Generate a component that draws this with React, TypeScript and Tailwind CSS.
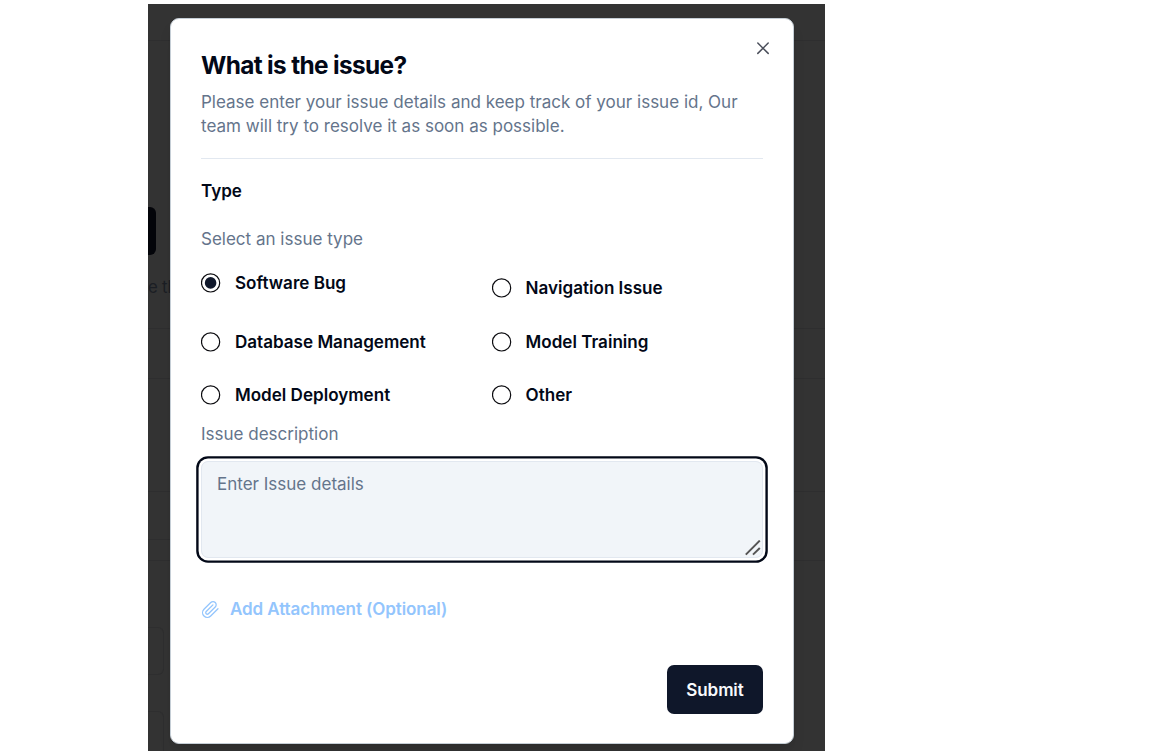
import React from "react";

type OptionProps = { label: string; checked?: boolean; className?: string };

function Option({ label, checked = false, className = "" }: OptionProps) {
  return (
    <div className={`flex h-5 items-center gap-[14px] ${className}`}>
      <span
        role="radio"
        aria-checked={checked}
        className="flex size-5 shrink-0 items-center justify-center"
      >
        <svg viewBox="0 0 20 20" className="size-5" fill="none">
          <circle cx="9.6" cy="9.9" r="9.1" stroke="#0b0b0f" strokeWidth="1.2" />
          {checked && <circle cx="9.6" cy="9.9" r="5.8" fill="#0f172a" />}
        </svg>
      </span>
      <span className="text-[17.07px] leading-5 font-semibold">{label}</span>
    </div>
  );
}

function Backdrop() {
  return (
    <div className="absolute inset-0 flex flex-col overflow-hidden bg-[#333333] text-[#1b1e24]">
      <div className="h-[37px] shrink-0 border-b border-[#2e2e2f]" />
      <div className="h-[166px] shrink-0" />
      <div className="h-12 w-2 shrink-0 rounded-r-md bg-[#030409]" />
      <div className="mt-[20px] h-6 shrink-0 text-[16.8px] leading-6 tracking-[-0.2px] whitespace-nowrap">e the</div>
      <div className="mt-[29px] h-[51px] shrink-0 border-y border-[#2e2e2f]" />
      <div className="h-[113px] shrink-0 border-b border-[#2e2e2f]" />
      <div className="h-[48px] w-8 shrink-0 border-b border-[#2e2e2f]" />
      <div className="h-[21px] shrink-0 border-b border-[#2e2e2f]" />
      <div className="mt-[66px] h-12 w-4 shrink-0 rounded-r-md border border-l-0 border-[#2e2e2f]" />
      <div className="mt-9 h-12 w-4 shrink-0 rounded-r-md border border-l-0 border-[#2e2e2f]" />
    </div>
  );
}

export default function App() {
  return (
    <div className="h-[751px] w-[1152px] overflow-hidden bg-white pt-1 pl-[148px] font-['Inter',sans-serif]">
      <div className="relative h-[747px] w-[677px] overflow-hidden pt-[14px] pl-[22.4px]">
        <Backdrop />
        <div
          role="dialog"
          className="relative flex h-[726px] w-[623.2px] flex-col rounded-[9px] border border-[#c5ced6] bg-white pr-[29.6px] pl-[29.6px] text-[#020817] shadow-lg"
        >
          <button aria-label="Close" className="absolute top-[19px] right-[19.6px] size-5">
            <svg viewBox="0 0 20 20" className="size-5" fill="none" stroke="#4b4f5b" strokeWidth="1.5">
              <path d="M4.8 5 15.2 15.4M15.2 5 4.8 15.4" strokeLinecap="round" />
            </svg>
          </button>

          <h1 className="mt-[34px] h-6 text-[24.4px] leading-6 font-bold tracking-[-0.65px]">
            What is the issue?
          </h1>
          <p className="mt-[13px] w-[562px] text-[17.03px] leading-6 whitespace-nowrap text-[#64748b]">
            Please enter your issue details and keep track of your issue id, Our
            <br />
            team will try to resolve it as soon as possible.
          </p>
          <hr className="mt-[20px] border-t border-[#e2e8f0]" />

          <h2 className="mt-[20px] h-6 text-[17.07px] leading-6 font-semibold">Type</h2>
          <p className="mt-6 h-6 text-[17.03px] leading-6 text-[#64748b]">Select an issue type</p>

          <div className="mt-[22px] grid grid-cols-[290.6px_1fr] gap-y-[33.5px]">
            <Option label="Software Bug" checked />
            <Option label="Navigation Issue" className="mt-[5px]" />
            <Option label="Database Management" />
            <Option label="Model Training" />
            <Option label="Model Deployment" />
            <Option label="Other" />
          </div>

          <p className="mt-[17px] h-6 text-[17.03px] leading-6 text-[#64748b]">Issue description</p>
          <div className="mt-[15px] flex h-[97px] shrink-0 justify-between rounded-[7px] border border-[#e2e8f0] bg-[#f1f5f9] px-[15px] pt-[10px] ring-[2.4px] ring-[#020817] ring-offset-[2.4px]">
            <span className="text-[17.03px] leading-6 text-[#64748b]">Enter Issue details</span>
            <svg viewBox="0 0 16 16" className="mt-[68px] -mr-[14px] size-4 shrink-0" fill="none" stroke="#555" strokeWidth="2">
              <path d="M0.8 14.6 14.8 0.6M8 14.6 14.8 8" />
            </svg>
          </div>

          <div className="mt-[39px] flex h-6 items-center gap-[10px] text-[#93c5fd]">
            <svg
              viewBox="0 0 24 24"
              className="size-[19px]"
              fill="none"
              stroke="currentColor"
              strokeWidth="1.6"
              strokeLinecap="round"
              strokeLinejoin="round"
            >
              <path d="m21.44 11.05-9.19 9.19a6 6 0 0 1-8.49-8.49l8.57-8.57A4 4 0 1 1 18 8.84l-8.59 8.57a2 2 0 0 1-2.83-2.83l8.49-8.48" />
            </svg>
            <span className="text-[17.03px] leading-6 font-semibold tracking-[-0.09px]">
              Add Attachment (Optional)
            </span>
          </div>

          <button className="mt-[44px] h-[49px] w-24 self-end rounded-[7px] bg-[#0f172a] text-[17.03px] leading-6 font-semibold tracking-[-0.09px] text-[#f8fafc]">
            Submit
          </button>
        </div>
      </div>
    </div>
  );
}
